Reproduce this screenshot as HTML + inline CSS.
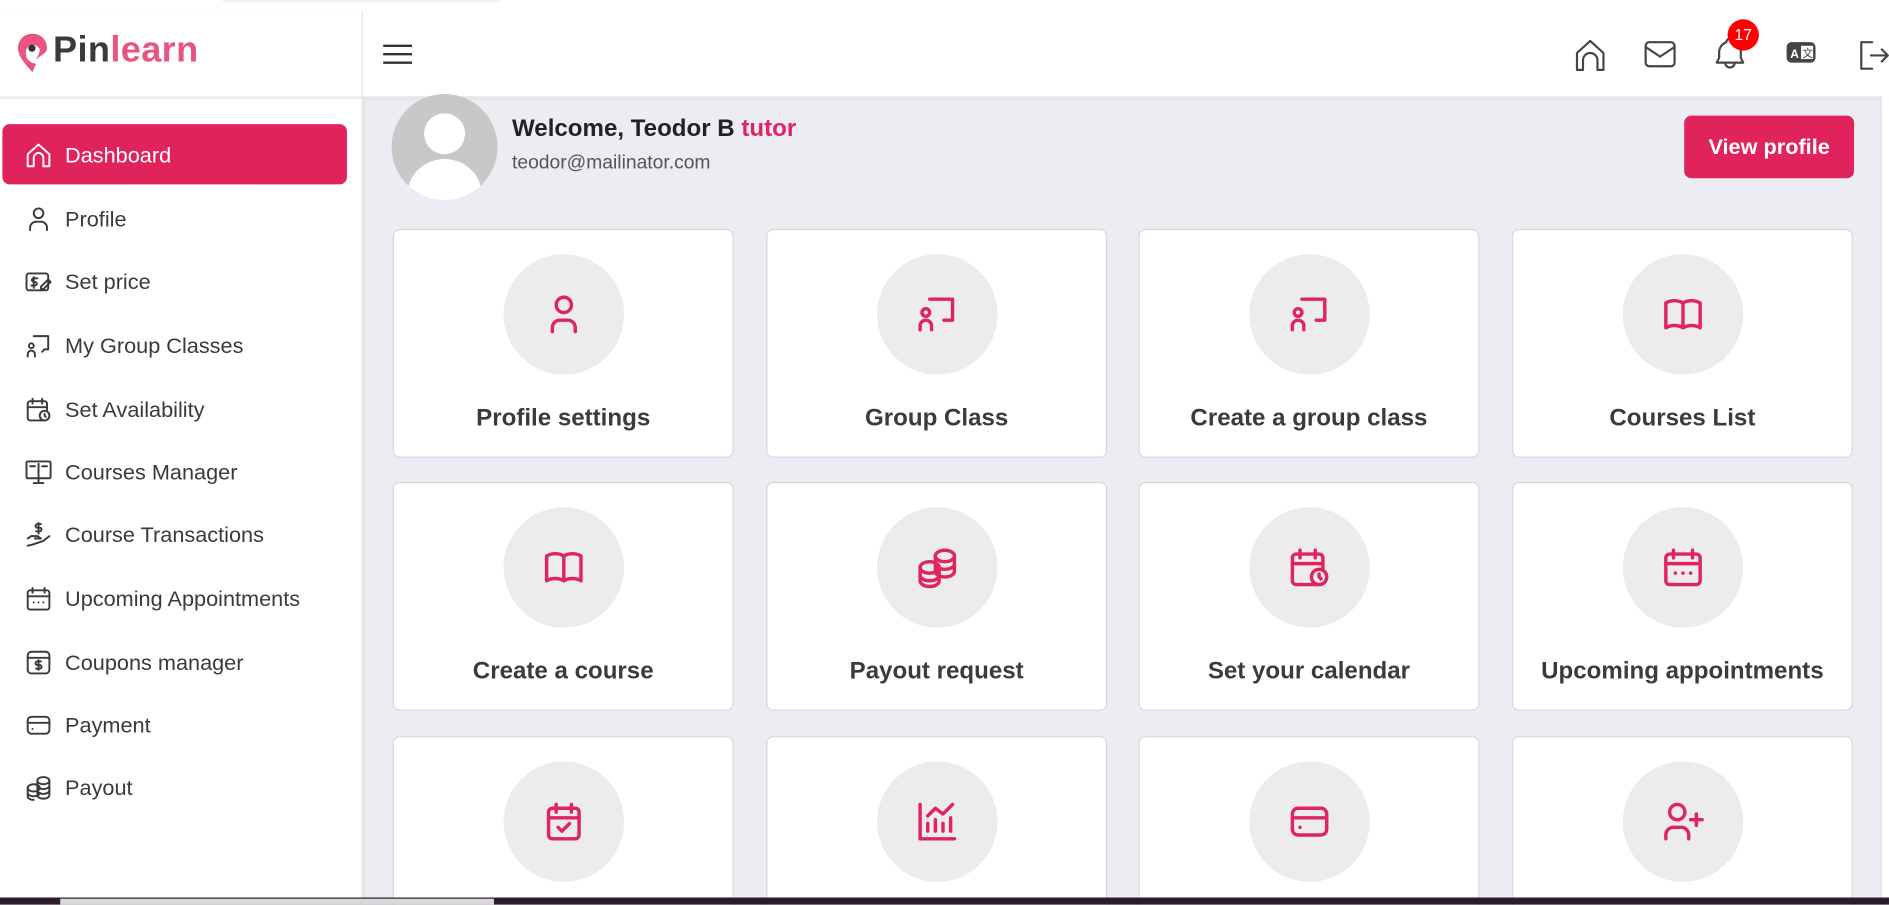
<!DOCTYPE html>
<html><head><meta charset="utf-8"><style>
html,body{margin:0;padding:0;width:1889px;height:905px;overflow:hidden;background:#fff;}
#w{position:absolute;left:0;top:0;width:1568px;height:751px;transform:scale(1.20472);transform-origin:0 0;font-family:"Liberation Sans",sans-serif;overflow:hidden;background:#ebedf2;}
.abs{position:absolute}
.side{left:0;top:10px;width:300px;height:741px;background:#fff;border-right:1px solid #e4e4e8;box-shadow:2px 0 4px rgba(0,0,0,.04)}
.hdr{left:301px;top:10px;width:1267px;height:70px;background:#fff;box-shadow:0 2px 3px rgba(0,0,0,.05)}
.mi{position:absolute;left:20px;height:30px;display:flex;align-items:center;font-size:18px;color:#3a3a3a}
.mi svg{width:24px;height:24px;margin-right:10px;stroke:#3a3a3a;fill:none;stroke-width:1.6;stroke-linecap:round;stroke-linejoin:round}
.card{position:absolute;width:283px;height:190px;background:#fff;border:1px solid #d8d8dc;border-radius:6px;box-sizing:border-box}
.card .c{position:absolute;left:91px;top:20px;width:100px;height:100px;border-radius:50%;background:#ececec;display:flex;align-items:center;justify-content:center}
.card .c svg{width:38px;height:38px;stroke:#e0245e;fill:none;stroke-width:1.8;stroke-linecap:round;stroke-linejoin:round}
.card .t{position:absolute;left:0;right:0;top:145px;text-align:center;font-size:20px;font-weight:bold;color:#3b3b3b}
.hi svg{position:absolute;width:28px;height:28px;stroke:#444;fill:none;stroke-width:1.8;stroke-linecap:round;stroke-linejoin:round}
</style></head><body><div id="w">
<div class="abs" style="left:0;top:0;width:1568px;height:10px;background:#fff;border-bottom:1px solid #ddd"></div>
<div class="abs" style="left:185px;top:0;width:230px;height:2px;background:#eef2f8"></div>
<div class="abs side"></div>
<div class="abs" style="left:0;top:80px;width:300px;height:2px;background:#ececec"></div>
<div class="abs hdr"></div>
<!-- logo -->
<svg class="abs" style="left:14px;top:27px" width="26" height="34" viewBox="0 0 26 34"><path d="M13 1C6 1 1 6 1 13c0 7 6 13 12 20 1-3 2-5 3-7-6-1-9-5-8.5-9A6 6 0 0 1 19 14c0 4-2 6-3.5 8.5C21 18 25 17 25 13 25 6 20 1 13 1z" fill="#e8557f"/><circle cx="12.5" cy="13" r="3" fill="#333"/></svg>
<div class="abs" style="left:44px;top:25px;font-size:30px;font-weight:bold;color:#3b3b3b;letter-spacing:.3px">Pin<span style="color:#e8557f">learn</span></div>
<!-- menu -->
<div class="abs" style="left:2px;top:103px;width:286px;height:50px;background:#e0245b;border-radius:6px"></div>
<div class="mi" style="top:114px;color:#fff"><svg viewBox="0 0 24 24" style="stroke:#fff"><path d="M3 21V11l9-8 9 8v10h-5v-7a4 4 0 0 0-8 0v7z"/></svg>Dashboard</div>
<div class="mi" style="top:167px"><svg viewBox="0 0 24 24"><circle cx="12" cy="7" r="4"/><path d="M5 21v-2a5 5 0 0 1 5-5h4a5 5 0 0 1 5 5v2"/></svg>Profile</div>
<div class="mi" style="top:219px"><svg viewBox="0 0 24 24"><rect x="2" y="5" width="18" height="14" rx="2"/><path d="M11 9H8a1.5 1.5 0 0 0 0 3h1a1.5 1.5 0 0 1 0 3H6M8 8v9M14 16l6-6 2 2-6 6h-2z"/></svg>Set price</div>
<div class="mi" style="top:272px"><svg viewBox="0 0 24 24"><path d="M8 4h12v11h-3"/><circle cx="6" cy="12" r="2"/><path d="M3 21v-2a3 3 0 0 1 6 0v2"/><path d="M17 15l-2 2"/></svg>My Group Classes</div>
<div class="mi" style="top:325px"><svg viewBox="0 0 24 24"><rect x="3" y="5" width="16" height="16" rx="2"/><path d="M7 3v4M15 3v4M3 10h16"/><circle cx="17" cy="17" r="4" fill="#fff"/><path d="M17 15.5V17l1 1"/></svg>Set Availability</div>
<div class="mi" style="top:377px"><svg viewBox="0 0 24 24"><rect x="2" y="3" width="20" height="14" rx="1"/><path d="M12 5v12M5 7h4M15 7h4M8 21h8M12 17v4"/></svg>Courses Manager</div>
<div class="mi" style="top:429px"><svg viewBox="0 0 24 24"><path d="M3 15l3-2h5l3 2H9M3 21l4-1 9-3 5-4M14 3h-3a1.5 1.5 0 0 0 0 3h2a1.5 1.5 0 0 1 0 3h-3M12 2v9"/></svg>Course Transactions</div>
<div class="mi" style="top:482px"><svg viewBox="0 0 24 24"><rect x="3" y="5" width="18" height="16" rx="2"/><path d="M7 3v4M17 3v4M3 10h18M8 15h.01M12 15h.01M16 15h.01"/></svg>Upcoming Appointments</div>
<div class="mi" style="top:535px"><svg viewBox="0 0 24 24"><rect x="3" y="3" width="18" height="18" rx="3"/><path d="M3 8h18M14 11h-3a1.5 1.5 0 0 0 0 3h2a1.5 1.5 0 0 1 0 3h-3M12 10v8"/></svg>Coupons manager</div>
<div class="mi" style="top:587px"><svg viewBox="0 0 24 24"><rect x="3" y="5" width="18" height="14" rx="3"/><path d="M3 10h18M7 15h.01"/></svg>Payment</div>
<div class="mi" style="top:639px"><svg viewBox="0 0 24 24"><ellipse cx="16" cy="6" rx="5" ry="3"/><path d="M11 6v4c0 1.7 2.2 3 5 3s5-1.3 5-3V6M11 10v4c0 1.7 2.2 3 5 3s5-1.3 5-3v-4M11 14v4c0 1.7 2.2 3 5 3s5-1.3 5-3v-4"/><ellipse cx="8" cy="12" rx="5" ry="3"/><path d="M3 12v4c0 1.7 2.2 3 5 3s5-1.3 5-3M3 16v3c0 1.7 2.2 3 5 3"/></svg>Payout</div>
<!-- header -->
<svg class="abs" style="left:318px;top:36px" width="25" height="18"><path d="M0 2h24M0 9h24M0 16h24" stroke="#333" stroke-width="2"/></svg>
<div class="hi">
<svg viewBox="0 0 28 28" style="left:1306px;top:31px"><path d="M3 27V13L14 3l11 10v14h-5v-8a6 6 0 0 0-12 0v8z"/></svg>
<svg viewBox="0 0 28 28" style="left:1364px;top:32px"><rect x="2" y="3" width="24" height="20" rx="3"/><path d="M2 7l12 8 12-8"/></svg>
<svg viewBox="0 0 28 28" style="left:1422px;top:30px"><path d="M11 5a3 3 0 0 1 6 0 9 9 0 0 1 6 8v5l2 4H3l2-4v-5a9 9 0 0 1 6-8M10 22a4 4 0 0 0 8 0"/></svg>
<svg viewBox="0 0 28 28" style="left:1481px;top:30px;stroke:none"><rect x="2" y="5" width="24" height="17" rx="4" fill="#444"/><rect x="14" y="8" width="10" height="11" fill="#fff"/><text x="5" y="18" font-size="10" font-weight="bold" fill="#fff" font-family="Liberation Sans">A</text><text x="15" y="17.5" font-size="9" fill="#444" font-family="Noto Sans CJK SC,sans-serif">文</text></svg>
<svg viewBox="0 0 28 28" style="left:1540px;top:31px"><path d="M14 4H5v22h9M13 15h14M22 10l5 5-5 5"/></svg>
</div>
<div class="abs" style="left:1434px;top:16px;width:26px;height:26px;border-radius:50%;background:#f00;color:#fff;font-size:13px;text-align:center;line-height:26px">17</div>
<!-- welcome -->
<div class="abs" style="left:325px;top:78px;width:88px;height:88px;border-radius:50%;background:#c8c8c8;overflow:hidden"><div class="abs" style="left:27px;top:16px;width:34px;height:34px;border-radius:50%;background:#fff"></div><div class="abs" style="left:13px;top:54px;width:62px;height:60px;border-radius:50%;background:#fff"></div></div>
<div class="abs" style="left:425px;top:96px;font-size:20px;font-weight:bold;color:#222">Welcome, Teodor B <span style="color:#e0245e">tutor</span></div>
<div class="abs" style="left:425px;top:127px;font-size:16px;color:#555">teodor@mailinator.com</div>
<div class="abs" style="left:1398px;top:96px;width:141px;height:52px;background:#e0245b;border-radius:6px;color:#fff;font-size:18px;font-weight:bold;text-align:center;line-height:52px">View profile</div>
<!-- cards -->
<div class="card" style="left:326px;top:190px"><div class="c"><svg viewBox="0 0 24 24"><circle cx="12" cy="7" r="4"/><path d="M6 21v-2a4 4 0 0 1 4-4h4a4 4 0 0 1 4 4v2"/></svg></div><div class="t">Profile settings</div></div>
<div class="card" style="left:636px;top:190px"><div class="c"><svg viewBox="0 0 24 24"><path d="M8 4h12v11h-3"/><circle cx="6" cy="11" r="2"/><path d="M3 20v-2a3 3 0 0 1 6 0v2M17 15l-1.5 0"/></svg></div><div class="t">Group Class</div></div>
<div class="card" style="left:945px;top:190px"><div class="c"><svg viewBox="0 0 24 24"><path d="M8 4h12v11h-3"/><circle cx="6" cy="11" r="2"/><path d="M3 20v-2a3 3 0 0 1 6 0v2M17 15l-1.5 0"/></svg></div><div class="t">Create a group class</div></div>
<div class="card" style="left:1255px;top:190px"><div class="c"><svg viewBox="0 0 24 24"><path d="M3 19a9 9 0 0 1 9 0 9 9 0 0 1 9 0V6a9 9 0 0 0-9 0 9 9 0 0 0-9 0zM12 6v13"/></svg></div><div class="t">Courses List</div></div>
<div class="card" style="left:326px;top:400px"><div class="c"><svg viewBox="0 0 24 24"><path d="M3 19a9 9 0 0 1 9 0 9 9 0 0 1 9 0V6a9 9 0 0 0-9 0 9 9 0 0 0-9 0zM12 6v13"/></svg></div><div class="t">Create a course</div></div>
<div class="card" style="left:636px;top:400px"><div class="c"><svg viewBox="0 0 24 24"><ellipse cx="16" cy="6" rx="5" ry="3"/><path d="M11 6v4c0 1.7 2.2 3 5 3s5-1.3 5-3V6M11 10v4c0 1.7 2.2 3 5 3s5-1.3 5-3v-4"/><ellipse cx="8" cy="12" rx="5" ry="3"/><path d="M3 12v4c0 1.7 2.2 3 5 3s5-1.3 5-3v-4M3 16v3c0 1.7 2.2 3 5 3s5-1.3 5-3v-3"/></svg></div><div class="t">Payout request</div></div>
<div class="card" style="left:945px;top:400px"><div class="c"><svg viewBox="0 0 24 24"><rect x="3" y="5" width="16" height="16" rx="2"/><path d="M7 3v4M15 3v4M3 10h16"/><circle cx="17" cy="17" r="4" fill="#ececec"/><path d="M17 15.5V17l1 1"/></svg></div><div class="t">Set your calendar</div></div>
<div class="card" style="left:1255px;top:400px"><div class="c"><svg viewBox="0 0 24 24"><rect x="3" y="5" width="18" height="16" rx="2"/><path d="M7 3v4M17 3v4M3 10h18M8 15h.01M12 15h.01M16 15h.01"/></svg></div><div class="t">Upcoming appointments</div></div>
<div class="card" style="left:326px;top:611px"><div class="c"><svg viewBox="0 0 24 24"><rect x="4" y="5" width="16" height="16" rx="2"/><path d="M8 3v4M16 3v4M4 10h16M9 15l2 2 4-4"/></svg></div></div>
<div class="card" style="left:636px;top:611px"><div class="c"><svg viewBox="0 0 24 24"><path d="M3 3v18h18M7 17v-4M11 17v-6M15 17v-4M19 17v-7M7 9l4-4 4 3 5-5"/></svg></div></div>
<div class="card" style="left:945px;top:611px"><div class="c"><svg viewBox="0 0 24 24"><rect x="3" y="5" width="18" height="14" rx="3"/><path d="M3 10h18M7 15h.01"/></svg></div></div>
<div class="card" style="left:1255px;top:611px"><div class="c"><svg viewBox="0 0 24 24"><circle cx="9" cy="7" r="4"/><path d="M3 21v-2a4 4 0 0 1 4-4h4a4 4 0 0 1 4 4v2M16 11h6M19 8v6"/></svg></div></div>
<div class="abs" style="left:1561px;top:80px;width:7px;height:665px;background:#fff;border-left:1px solid #ddd"></div>
<div class="abs" style="left:0;top:745px;width:1568px;height:6px;background:#2d1a2c"></div>
<div class="abs" style="left:50px;top:746px;width:360px;height:5px;background:#d8d8d8"></div>
</div></body></html>
